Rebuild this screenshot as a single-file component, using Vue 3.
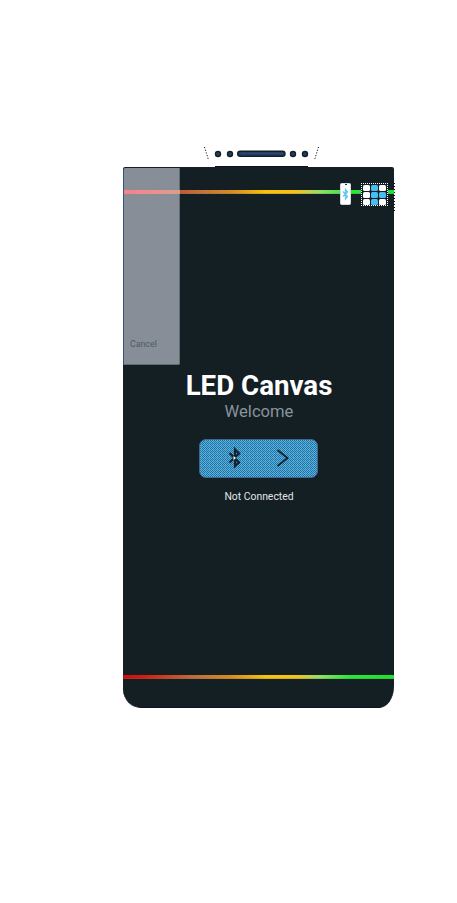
<script setup>
const keys = [0, 1, 0, 0, 1, 1, 0, 1, 0]
</script>

<template>
  <main class="stage">
    <svg class="speaker" width="120" height="21" viewBox="0 0 120 21">
      <g fill="none" stroke="#10102a" stroke-width="1" stroke-dasharray="1.2 1.6">
        <path d="M.5 1 4.500 14" /><path d="M114.500 1 110.500 14" />
      </g>
      <g fill="#243d66" stroke="#141e28" stroke-width="1.4">
        <circle cx="14" cy="8" r="2.500" /><circle cx="26" cy="8" r="2.500" />
        <rect x="33.700" y="5.200" width="47.300" height="5" rx="2.500" />
        <circle cx="89" cy="8" r="2.500" /><circle cx="101" cy="8" r="2.500" />
      </g>
      <path d="M38 7.500H80" stroke="#35507c" stroke-dasharray="1 1" />
      <path d="M11 20.500H104" stroke="#10102a" />
    </svg>

    <section class="phone">
      <div class="rainbow"></div>
      <div class="tools">
        <svg class="device" width="11" height="22" viewBox="0 0 11 22">
          <rect x=".5" y=".5" width="10" height="21" rx="1" fill="#fff" stroke="#d8dcdd" />
          <path d="M5 1h2v1H5z" fill="#26323b" />
          <path d="m3 8.500 4.500 5L5.500 16V6.500l2 2.500L3 13.500" fill="none" stroke="#62c5ee" stroke-width="1.300" />
        </svg>
        <div class="grid">
          <i v-for="(k, n) in keys" :key="n" :class="{ lit: k }"></i>
        </div>
        <svg class="edge" width="2" height="28" viewBox="0 0 2 28">
          <path d="M.5 0V28" stroke="#10102a" stroke-dasharray="1 2" />
        </svg>
      </div>
      <div class="content">
        <h1>LED Canvas</h1>
        <p class="welcome">Welcome</p>
        <button class="connect">
          <svg width="119" height="39" viewBox="0 0 119 39">
            <defs>
              <pattern id="weave" width="4" height="4" patternUnits="userSpaceOnUse">
                <g shape-rendering="crispEdges">
                  <path d="M0 0h4v4H0z" fill="#38c0f8" />
                  <path d="M0 0h1v1H0zM2 0h1v1H2zM1 1h1v1H1zM3 1h1v1H3zM0 2h1v1H0zM2 2h1v1H2zM1 3h1v1H1zM3 3h1v1H3z" fill="#42628e" />
                  <path d="M2 2h1v1H2z" fill="#6c8274" />
                </g>
              </pattern>
            </defs>
            <rect x=".5" y=".5" width="118" height="38" rx="6.500" fill="url(#weave)" stroke="#45648c" />
            <g fill="none" stroke="#132332">
              <path d="M30.500 14 40 23.500 36 27V10.500L40 14.500 30.500 23.500" stroke-width="2.300" />
              <path d="m78.500 11 10 8-10 8" stroke-width="1.800" />
            </g>
            <path d="M34.500 17v4l2.500-2z" fill="#fff" />
          </svg>
        </button>
        <p class="status">Not Connected</p>
      </div>
      <div class="rainbow bottom"></div>
      <aside class="drawer"><span>Cancel</span></aside>
    </section>
  </main>
</template>

<style>
body { background: #fff; }
</style>
<style scoped>
.stage {
  box-sizing: border-box;
  width: 457px;
  height: 903px;
  padding: 146px 63px 0 123px;
  font-family: Roboto, sans-serif;
}
.speaker { display: block; margin-left: 81px; }
.phone {
  position: relative;
  box-sizing: border-box;
  display: flex;
  flex-direction: column;
  width: 271px;
  height: 541px;
  padding-top: 23px;
  background: #141f24;
  border-bottom: 1px solid #10101f;
  border-radius: 2px 2px 15px 18px / 2px 2px 22px 19px;
}
.rainbow {
  height: 4px;
  background: linear-gradient(90deg, #d10c0d 0, #d01b10 7%, #c16b3b 26%, #d78c20 40%, #fac20b 53%, #f4c21c 64%, #98de68 72%, #26e83a 84%, #1de32e 100%);
  box-shadow: inset 0 -1px #59716640;
}
.tools {
  position: absolute;
  top: 16px;
  left: 217px;
  display: flex;
  gap: 10px;
}
.device { display: block; }
.edge { display: block; margin-left: -4px; }
.grid {
  display: grid;
  grid-template-columns: repeat(3, 7px);
  grid-template-rows: repeat(3, 6px);
  gap: 1px;
  box-sizing: border-box;
  width: 27px;
  height: 23px;
  padding: 1px;
  background: #141f24;
  border: 1px dotted #fff;
}
.grid i { background: #fff; border-radius: 1.5px; }
.grid .lit { background: #47bdf0; }
.content {
  display: flex;
  flex-direction: column;
  align-items: center;
  flex: 1;
  padding-top: 175px;
}
h1 {
  margin: 0 0 0 1px;
  font-size: 27.7px;
  line-height: 34px;
  font-weight: 700;
  color: #fff;
  white-space: nowrap;
}
.welcome {
  margin: -1px 0 0 1px;
  font-size: 16.6px;
  line-height: 20px;
  color: #8a949b;
}
.connect {
  width: 119px;
  height: 39px;
  margin: 17px 0 0;
  padding: 0;
  border: 0;
  background: none;
}
.connect svg { display: block; }
.status {
  margin: 11px 0 0 1px;
  font-size: 10.4px;
  line-height: 16px;
  color: #e0e4e6;
}
.bottom { margin-bottom: 28px; }
.drawer {
  position: absolute;
  top: 1px;
  left: 0;
  box-sizing: border-box;
  width: 57px;
  height: 197px;
  display: flex;
  align-items: flex-end;
  padding: 0 0 13px 6px;
  background: #939aa4e8;
  border: solid #5e6d71;
  border-width: 0 1px 1px 1px;
  border-left-color: #37527c;
  border-radius: 2px 0 2px 0;
  font-size: 8.8px;
  line-height: 14px;
  color: #4d5b62;
}
.drawer::before {
  content: "";
  position: absolute;
  top: 22px;
  left: 0;
  width: 56px;
  height: 4px;
  background: linear-gradient(90deg, #f5838f, #e9928d 60%, #d1a18d);
}
</style>
